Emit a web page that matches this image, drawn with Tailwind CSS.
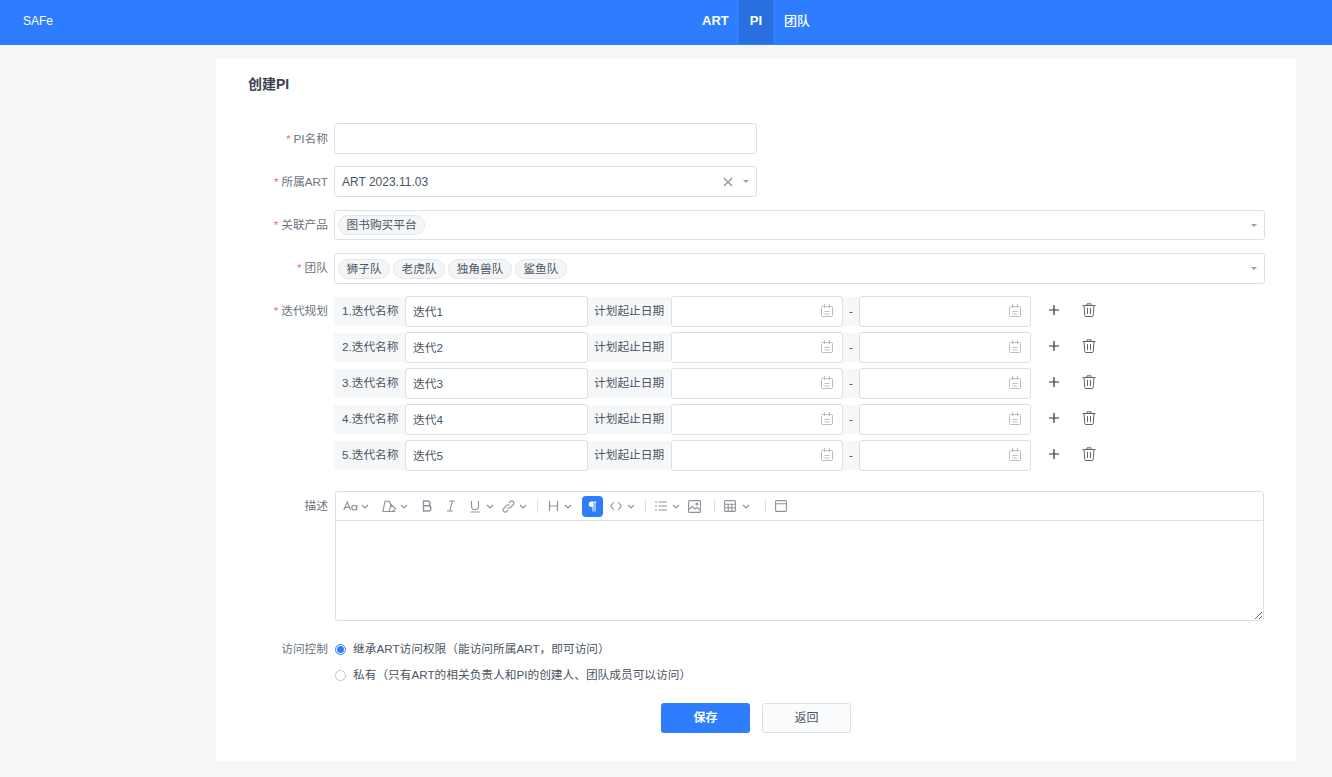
<!DOCTYPE html>
<html lang="zh">
<head>
<meta charset="utf-8">
<title>创建PI</title>
<script src="https://cdn.jsdelivr.net/npm/@tailwindcss/browser@4"></script>
</head>
<body class="m-0 h-[777px] overflow-hidden bg-[#f5f7f9] text-[11.7px] text-[#4b5563] font-['Liberation_Sans','Noto_Sans_CJK_SC',sans-serif]">
<svg class="hidden">
  <symbol id="cal" viewBox="0 0 14 14"><g fill="none" stroke="#b9bdc5" stroke-width="1"><rect x="1.5" y="2.5" width="11" height="10" rx="1"/><path d="M4.5 0v4M9.5 0v4M4.5 7.5h5M4.5 10h5"/></g></symbol>
  <symbol id="plus" viewBox="0 0 12 12"><path d="M6 1v10M1 6h10" stroke="#2f3147" stroke-width="1.2" fill="none"/></symbol>
  <symbol id="trash" viewBox="0 0 14 14"><g fill="none" stroke="#5f6672" stroke-width="1"><path d="M.5 2.5h13M2 2.5l.8 10.2c0 .5.4.8.8.8h6.8c.4 0 .8-.3.8-.8L12 2.5M5 2.5V.8h4v1.7M5.5 5v6M8.5 5v6"/></g></symbol>
  <symbol id="caret" viewBox="0 0 8 5"><path d="M1 1l3 3 3-3" fill="none" stroke="#8d929c" stroke-width="1.1"/></symbol>
</svg>

<header class="flex h-[45px] bg-[#2e7dff] text-white">
  <div class="w-[691px] pl-[23px] text-[12px] leading-[43px]">SAFe</div>
  <nav class="flex h-[44px] text-[13px] font-semibold leading-[42px]">
    <a class="pl-[11px] pr-[10px]">ART</a>
    <a class="px-[11px] bg-[#2a6fe0]">PI</a>
    <a class="px-[11px] font-medium">团队</a>
  </nav>
</header>

<main class="ml-[216px] mt-[14px] h-[702px] w-[1080px] rounded-[3px] bg-white">
  <h1 class="pl-[32px] pt-[17px] text-[14px] font-semibold leading-[16px] text-[#3b4252]">创建PI</h1>

  <form class="pt-[31px] text-[#4b5563]">
    <div class="flex h-[31px] mb-[12px]">
      <label class="w-[112px] shrink-0 text-right leading-[31px] text-[#6b7280]"><span class="text-[#f56c6c] mr-[3px]">*</span>PI名称</label>
      <input class="ml-[6px] h-[31px] w-[423px] rounded-[3px] border border-[#dcdfe6] bg-white px-[7px] outline-none">
    </div>

    <div class="flex h-[31px] mb-[13px]">
      <label class="w-[112px] shrink-0 text-right leading-[31px] text-[#6b7280]"><span class="text-[#f56c6c] mr-[3px]">*</span>所属ART</label>
      <div class="ml-[6px] flex h-[31px] w-[423px] items-center rounded-[3px] border border-[#dcdfe6] pl-[7px] pr-[7px]">
        <span class="flex-1 text-[12px] text-[#4b5563]">ART 2023.11.03</span>
        <svg class="mr-[10px] h-[10px] w-[10px]" viewBox="0 0 10 10"><path d="M1 1l8 8M9 1l-8 8" stroke="#8d929c" stroke-width="1.3" fill="none"/></svg>
        <span class="h-0 w-0 border-x-[3px] border-t-[3px] border-x-transparent border-t-[#9a9ea8]"></span>
      </div>
    </div>

    <div class="flex h-[30px] mb-[13px]">
      <label class="w-[112px] shrink-0 text-right leading-[30px] text-[#6b7280]"><span class="text-[#f56c6c] mr-[3px]">*</span>关联产品</label>
      <div class="ml-[6px] flex h-[30px] w-[931px] items-center gap-[3px] rounded-[3px] border border-[#dcdfe6] pl-[3px] pr-[7px]">
        <span class="h-[20px] rounded-full border border-[#e4e7ed] bg-[#f4f5f7] px-[7.5px] leading-[18px]">图书购买平台</span>
        <span class="ml-auto h-0 w-0 border-x-[3px] border-t-[3px] border-x-transparent border-t-[#9a9ea8]"></span>
      </div>
    </div>

    <div class="flex h-[31px] mb-[12px]">
      <label class="w-[112px] shrink-0 text-right leading-[30px] text-[#6b7280]"><span class="text-[#f56c6c] mr-[3px]">*</span>团队</label>
      <div class="ml-[6px] flex h-[31px] w-[931px] items-center gap-[3px] rounded-[3px] border border-[#dcdfe6] pl-[3px] pr-[7px]">
        <span class="h-[20px] rounded-full border border-[#e4e7ed] bg-[#f4f5f7] px-[7.5px] leading-[17px]">狮子队</span>
        <span class="h-[20px] rounded-full border border-[#e4e7ed] bg-[#f4f5f7] px-[7.5px] leading-[17px]">老虎队</span>
        <span class="h-[20px] rounded-full border border-[#e4e7ed] bg-[#f4f5f7] px-[7.5px] leading-[17px]">独角兽队</span>
        <span class="h-[20px] rounded-full border border-[#e4e7ed] bg-[#f4f5f7] px-[7.5px] leading-[17px]">鲨鱼队</span>
        <span class="ml-auto h-0 w-0 border-x-[3px] border-t-[3px] border-x-transparent border-t-[#9a9ea8]"></span>
      </div>
    </div>

    <div class="flex">
      <label class="w-[112px] shrink-0 text-right leading-[30px] text-[#6b7280]"><span class="text-[#f56c6c] mr-[3px]">*</span>迭代规划</label>
      <div class="ml-[6px] flex flex-col gap-[5px]">
        <div class="flex h-[31px] items-center">
          <span class="h-[29px] w-[71px] bg-[#f5f7f9] pl-[8px] leading-[27px]">1.迭代名称</span>
          <input value="迭代1" class="h-[31px] w-[183px] rounded-[3px] border border-[#dcdfe6] px-[7px] pb-[3px] outline-none">
          <span class="h-[29px] w-[83px] bg-[#f5f7f9] pl-[6px] leading-[27px]">计划起止日期</span>
          <div class="flex h-[31px] w-[172px] items-center justify-end rounded-[3px] border border-[#dcdfe6] pr-[8px]"><svg class="mb-[1px] h-[14px] w-[14px]"><use href="#cal"/></svg></div>
          <span class="h-[29px] w-[16px] bg-[#f5f7f9] text-center leading-[28px]">-</span>
          <div class="flex h-[31px] w-[172px] items-center justify-end rounded-[3px] border border-[#dcdfe6] pr-[8px]"><svg class="mb-[1px] h-[14px] w-[14px]"><use href="#cal"/></svg></div>
          <svg class="ml-[17px] mb-[3px] h-[12px] w-[12px]"><use href="#plus"/></svg>
          <svg class="ml-[22px] mb-[3px] h-[14px] w-[14px]"><use href="#trash"/></svg>
        </div>
        <div class="flex h-[31px] items-center">
          <span class="h-[29px] w-[71px] bg-[#f5f7f9] pl-[8px] leading-[27px]">2.迭代名称</span>
          <input value="迭代2" class="h-[31px] w-[183px] rounded-[3px] border border-[#dcdfe6] px-[7px] pb-[3px] outline-none">
          <span class="h-[29px] w-[83px] bg-[#f5f7f9] pl-[6px] leading-[27px]">计划起止日期</span>
          <div class="flex h-[31px] w-[172px] items-center justify-end rounded-[3px] border border-[#dcdfe6] pr-[8px]"><svg class="mb-[1px] h-[14px] w-[14px]"><use href="#cal"/></svg></div>
          <span class="h-[29px] w-[16px] bg-[#f5f7f9] text-center leading-[28px]">-</span>
          <div class="flex h-[31px] w-[172px] items-center justify-end rounded-[3px] border border-[#dcdfe6] pr-[8px]"><svg class="mb-[1px] h-[14px] w-[14px]"><use href="#cal"/></svg></div>
          <svg class="ml-[17px] mb-[3px] h-[12px] w-[12px]"><use href="#plus"/></svg>
          <svg class="ml-[22px] mb-[3px] h-[14px] w-[14px]"><use href="#trash"/></svg>
        </div>
        <div class="flex h-[31px] items-center">
          <span class="h-[29px] w-[71px] bg-[#f5f7f9] pl-[8px] leading-[27px]">3.迭代名称</span>
          <input value="迭代3" class="h-[31px] w-[183px] rounded-[3px] border border-[#dcdfe6] px-[7px] pb-[3px] outline-none">
          <span class="h-[29px] w-[83px] bg-[#f5f7f9] pl-[6px] leading-[27px]">计划起止日期</span>
          <div class="flex h-[31px] w-[172px] items-center justify-end rounded-[3px] border border-[#dcdfe6] pr-[8px]"><svg class="mb-[1px] h-[14px] w-[14px]"><use href="#cal"/></svg></div>
          <span class="h-[29px] w-[16px] bg-[#f5f7f9] text-center leading-[28px]">-</span>
          <div class="flex h-[31px] w-[172px] items-center justify-end rounded-[3px] border border-[#dcdfe6] pr-[8px]"><svg class="mb-[1px] h-[14px] w-[14px]"><use href="#cal"/></svg></div>
          <svg class="ml-[17px] mb-[3px] h-[12px] w-[12px]"><use href="#plus"/></svg>
          <svg class="ml-[22px] mb-[3px] h-[14px] w-[14px]"><use href="#trash"/></svg>
        </div>
        <div class="flex h-[31px] items-center">
          <span class="h-[29px] w-[71px] bg-[#f5f7f9] pl-[8px] leading-[27px]">4.迭代名称</span>
          <input value="迭代4" class="h-[31px] w-[183px] rounded-[3px] border border-[#dcdfe6] px-[7px] pb-[3px] outline-none">
          <span class="h-[29px] w-[83px] bg-[#f5f7f9] pl-[6px] leading-[27px]">计划起止日期</span>
          <div class="flex h-[31px] w-[172px] items-center justify-end rounded-[3px] border border-[#dcdfe6] pr-[8px]"><svg class="mb-[1px] h-[14px] w-[14px]"><use href="#cal"/></svg></div>
          <span class="h-[29px] w-[16px] bg-[#f5f7f9] text-center leading-[28px]">-</span>
          <div class="flex h-[31px] w-[172px] items-center justify-end rounded-[3px] border border-[#dcdfe6] pr-[8px]"><svg class="mb-[1px] h-[14px] w-[14px]"><use href="#cal"/></svg></div>
          <svg class="ml-[17px] mb-[3px] h-[12px] w-[12px]"><use href="#plus"/></svg>
          <svg class="ml-[22px] mb-[3px] h-[14px] w-[14px]"><use href="#trash"/></svg>
        </div>
        <div class="flex h-[31px] items-center">
          <span class="h-[29px] w-[71px] bg-[#f5f7f9] pl-[8px] leading-[27px]">5.迭代名称</span>
          <input value="迭代5" class="h-[31px] w-[183px] rounded-[3px] border border-[#dcdfe6] px-[7px] pb-[3px] outline-none">
          <span class="h-[29px] w-[83px] bg-[#f5f7f9] pl-[6px] leading-[27px]">计划起止日期</span>
          <div class="flex h-[31px] w-[172px] items-center justify-end rounded-[3px] border border-[#dcdfe6] pr-[8px]"><svg class="mb-[1px] h-[14px] w-[14px]"><use href="#cal"/></svg></div>
          <span class="h-[29px] w-[16px] bg-[#f5f7f9] text-center leading-[28px]">-</span>
          <div class="flex h-[31px] w-[172px] items-center justify-end rounded-[3px] border border-[#dcdfe6] pr-[8px]"><svg class="mb-[1px] h-[14px] w-[14px]"><use href="#cal"/></svg></div>
          <svg class="ml-[17px] mb-[3px] h-[12px] w-[12px]"><use href="#plus"/></svg>
          <svg class="ml-[22px] mb-[3px] h-[14px] w-[14px]"><use href="#trash"/></svg>
        </div>
      </div>
    </div>

    <div class="mt-[20px] flex">
      <label class="w-[112px] shrink-0 text-right leading-[30px] text-[#6b7280]">描述</label>
      <div class="ml-[7px] flex h-[130px] w-[929px] flex-col rounded-[3px] border border-[#dcdfe6]">
        <div class="flex h-[29px] shrink-0 items-center border-b border-[#dcdfe6] pl-[7px]">
          <svg class="h-[14px] w-[15px]" viewBox="0 0 15 14"><g fill="none" stroke="#8d929c" stroke-width="1.1"><path d="M.8 11L4.2 3l3.4 8M2 8.4h4.4"/><circle cx="11.2" cy="8.6" r="2.4"/><path d="M13.8 6v5"/></g></svg>
          <svg class="ml-[3px] h-[5px] w-[8px]"><use href="#caret"/></svg>
          <svg class="ml-[13px] h-[14px] w-[15px]" viewBox="0 0 15 14"><g fill="none" stroke="#8d929c" stroke-width="1.1"><path d="M3 2.2h4.2l2.8 6M3 2.2L1 12.5h12.5"/><path d="M9 5.5l4.5 4-3 3h-3.5z"/></g></svg>
          <svg class="ml-[3px] h-[5px] w-[8px]"><use href="#caret"/></svg>
          <svg class="ml-[13px] h-[14px] w-[12px]" viewBox="0 0 12 14"><path d="M2.5 2h4.2a2.4 2.4 0 0 1 0 4.8H2.5zM2.5 6.8h4.8a2.6 2.6 0 0 1 0 5.2H2.5z" fill="none" stroke="#8d929c" stroke-width="1.4"/></svg>
          <svg class="ml-[12px] h-[14px] w-[12px]" viewBox="0 0 12 14"><path d="M4 2h6M2 12h6M7.3 2L4.7 12" fill="none" stroke="#8d929c" stroke-width="1.1"/></svg>
          <svg class="ml-[12px] h-[14px] w-[12px]" viewBox="0 0 12 14"><path d="M2.5 2v5.2a3.5 3.5 0 0 0 7 0V2M1.5 13h9" fill="none" stroke="#8d929c" stroke-width="1.1"/></svg>
          <svg class="ml-[5px] h-[5px] w-[8px]"><use href="#caret"/></svg>
          <svg class="ml-[8px] h-[13px] w-[13px]" viewBox="0 0 13 13"><g fill="none" stroke="#8d929c" stroke-width="1.1"><path d="M5.5 7.5a2 2 0 0 0 3 0l2.8-2.8a2 2 0 0 0-3-3L7 3"/><path d="M7.5 5.5a2 2 0 0 0-3 0L1.7 8.3a2 2 0 0 0 3 3L6 10"/></g></svg>
          <svg class="ml-[4px] h-[5px] w-[8px]"><use href="#caret"/></svg>
          <span class="ml-[10px] h-[14px] w-px bg-[#dcdfe6]"></span>
          <svg class="ml-[10px] h-[12px] w-[11px]" viewBox="0 0 11 12"><path d="M1.5 1v10M9.5 1v10M1.5 6h8" fill="none" stroke="#8d929c" stroke-width="1.2"/></svg>
          <svg class="ml-[5px] h-[5px] w-[8px]"><use href="#caret"/></svg>
          <span class="ml-[10px] flex h-[21px] w-[21px] items-center justify-center rounded-[4px] bg-[#2e7dff]">
            <svg class="h-[11px] w-[9px]" viewBox="0 0 9 11"><path fill="#fff" d="M3.5.5H8.5v1H7.5v9H6.5v-9H5.5v9H4.5V6H3.5a2.75 2.75 0 0 1 0-5.5z"/></svg>
          </span>
          <svg class="ml-[7px] h-[10px] w-[12px]" viewBox="0 0 12 10"><path d="M4 1L.8 5 4 9M8 1l3.2 4L8 9" fill="none" stroke="#8d929c" stroke-width="1.1"/></svg>
          <svg class="ml-[5px] h-[5px] w-[8px]"><use href="#caret"/></svg>
          <span class="ml-[10px] h-[14px] w-px bg-[#dcdfe6]"></span>
          <svg class="ml-[9px] h-[10px] w-[12px]" viewBox="0 0 12 10"><path d="M3.5 1H12M3.5 5H12M3.5 9H12" stroke="#8d929c" stroke-width="1.1" fill="none"/><path d="M0 1h2M0 5h2M0 9h2" stroke="#c98a7a" stroke-width="1.1" fill="none"/></svg>
          <svg class="ml-[5px] h-[5px] w-[8px]"><use href="#caret"/></svg>
          <svg class="ml-[8px] h-[13px] w-[13px]" viewBox="0 0 13 13"><g fill="none" stroke="#8d929c" stroke-width="1.1"><rect x=".6" y=".6" width="11.8" height="11.8" rx="1"/><path d="M.8 9.5l3.4-3 2.8 2.5 2-1.6 3.2 2.6"/><circle cx="9" cy="4" r="1"/></g></svg>
          <span class="ml-[13px] h-[14px] w-px bg-[#dcdfe6]"></span>
          <svg class="ml-[9px] h-[12px] w-[12px]" viewBox="0 0 12 12"><path d="M1.5.6h9a.9.9 0 0 1 .9.9v9a.9.9 0 0 1-.9.9h-9a.9.9 0 0 1-.9-.9v-9a.9.9 0 0 1 .9-.9zM.6 4.2h10.8M.6 7.8h10.8M4.2 4.2v7.2M7.8 4.2v7.2" fill="none" stroke="#8d929c" stroke-width="1.1"/></svg>
          <svg class="ml-[6px] h-[5px] w-[8px]"><use href="#caret"/></svg>
          <span class="ml-[15px] h-[14px] w-px bg-[#dcdfe6]"></span>
          <svg class="ml-[9px] h-[12px] w-[12px]" viewBox="0 0 12 12"><path d="M1.5.6h9a.9.9 0 0 1 .9.9v9a.9.9 0 0 1-.9.9h-9a.9.9 0 0 1-.9-.9v-9a.9.9 0 0 1 .9-.9zM.6 3.8h10.8" fill="none" stroke="#8d929c" stroke-width="1.1"/></svg>
        </div>
        <textarea class="min-h-0 w-full flex-1 resize-y rounded-b-[3px] bg-white p-2 outline-none"></textarea>
      </div>
    </div>

    <div class="mt-[20px] flex h-[16px] items-center leading-[18px]">
      <label class="w-[112px] shrink-0 text-right text-[#6b7280]">访问控制</label>
      <span class="ml-[7px] flex h-[11px] w-[11px] items-center justify-center rounded-full border border-[#2e7dff]"><span class="h-[7px] w-[7px] rounded-full bg-[#2e7dff]"></span></span>
      <span class="ml-[7px]">继承ART访问权限（能访问所属ART，即可访问）</span>
    </div>
    <div class="mt-[10px] flex h-[16px] items-center leading-[18px]">
      <span class="ml-[119px] h-[11px] w-[11px] rounded-full border border-[#c4c8cf]"></span>
      <span class="ml-[7px]">私有（只有ART的相关负责人和PI的创建人、团队成员可以访问）</span>
    </div>

    <div class="mt-[20px] flex pl-[445px]">
      <button type="button" class="h-[30px] w-[89px] rounded-[3px] bg-[#2e7dff] text-[12px] font-semibold text-white">保存</button>
      <button type="button" class="ml-[12px] h-[30px] w-[89px] rounded-[3px] border border-[#dcdfe6] bg-[#fbfcfe] text-[12px] text-[#4b5563]">返回</button>
    </div>
  </form>
</main>
</body>
</html>
